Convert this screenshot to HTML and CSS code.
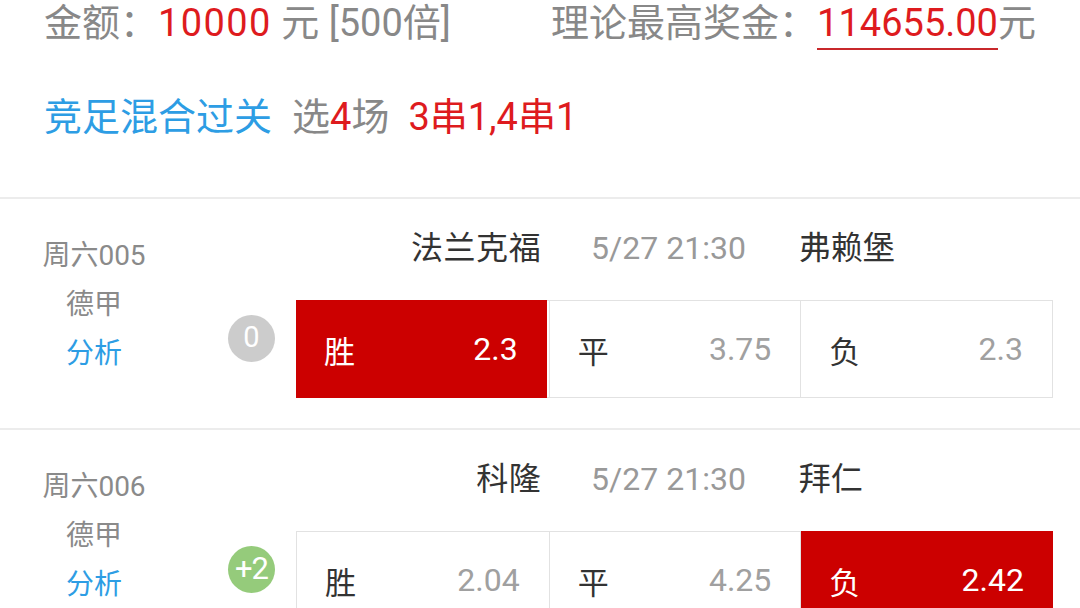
FILE: index.html
```html
<!DOCTYPE html>
<html lang="zh-CN">
<head>
<meta charset="utf-8">
<title>投注详情</title>
<link rel="stylesheet" href="styles.css">
</head>
<body>
<div class="summary">
  <div class="line line-top">
    <div class="amount">金额：<span class="red digits">10000</span> 元 [500倍]</div>
    <div class="prize">理论最高奖金：<span class="red underline">114655.00</span>元</div>
  </div>
  <div class="line line-type">
    <span class="blue">竞足混合过关</span>
    <span class="pick">选<span class="red">4</span>场</span>
    <span class="red pass">3串1,4串1</span>
  </div>
</div>

<div class="match">
  <div class="info">
    <div class="num">周六005</div>
    <div class="league">德甲</div>
    <div class="analysis">分析</div>
  </div>
  <div class="handicap">
    <div class="hc hc-zero">0</div>
  </div>
  <div class="main">
    <div class="teams">
      <div class="home">法兰克福</div>
      <div class="time">5/27 21:30</div>
      <div class="away">弗赖堡</div>
    </div>
    <div class="odds">
      <div class="cell selected"><span class="lab">胜</span><span class="val">2.3</span></div>
      <div class="cell"><span class="lab">平</span><span class="val">3.75</span></div>
      <div class="cell"><span class="lab">负</span><span class="val">2.3</span></div>
    </div>
  </div>
</div>

<div class="match">
  <div class="info">
    <div class="num">周六006</div>
    <div class="league">德甲</div>
    <div class="analysis">分析</div>
  </div>
  <div class="handicap">
    <div class="hc hc-plus">+2</div>
  </div>
  <div class="main">
    <div class="teams">
      <div class="home">科隆</div>
      <div class="time">5/27 21:30</div>
      <div class="away">拜仁</div>
    </div>
    <div class="odds">
      <div class="cell"><span class="lab">胜</span><span class="val">2.04</span></div>
      <div class="cell"><span class="lab">平</span><span class="val">4.25</span></div>
      <div class="cell selected"><span class="lab">负</span><span class="val">2.42</span></div>
    </div>
  </div>
</div>
</body>
</html>
```

FILE: styles.css
```css
* { box-sizing: border-box; }

body {
  margin: 0;
  background: #ffffff;
  font-family: Roboto, "Noto Sans CJK SC", sans-serif;
  color: #888888;
  overflow: hidden;
}

.red { color: #de1b1e; }
.blue { color: #2d9de4; }

.summary {
  padding: 0 44px;
  font-size: 38px;
}

.line {
  height: 46px;
  line-height: 46px;
  white-space: nowrap;
}

.line-top {
  display: flex;
  justify-content: space-between;
}

.digits { letter-spacing: 1.4px; }

.underline {
  display: inline-block;
  line-height: 46px;
  border-bottom: 2px solid #c8282b;
  height: 50px;
}

.line-type {
  margin-top: 48px;
  margin-bottom: 57px;
  display: flex;
}

.pick { margin-left: 20px; }
.pass { margin-left: 19px; }

.match {
  border-top: 2px solid #ececec;
  display: grid;
  grid-template-columns: 104px 1fr 757px;
  padding: 0 27px 30px 42px;
}

.info {
  padding-top: 32px;
  text-align: center;
  font-size: 28px;
  line-height: 49px;
  color: #8a8a8a;
  white-space: nowrap;
}

.info .analysis { color: #2d9de4; }

.handicap {
  display: flex;
  justify-content: flex-end;
  padding-top: 116px;
  padding-right: 21px;
}

.hc {
  width: 47px;
  height: 47px;
  border-radius: 50%;
  color: #ffffff;
  font-size: 29px;
  line-height: 45px;
  text-align: center;
  white-space: nowrap;
}

.hc-zero { background: #cccccc; }
.hc-plus { background: #95cb7b; font-size: 31px; letter-spacing: -1px; }

.teams {
  display: grid;
  grid-template-columns: 1fr 1fr 1fr;
  height: 98px;
  line-height: 98px;
  font-size: 32px;
  color: #333333;
  margin-bottom: 3px;
  white-space: nowrap;
}

.home { text-align: right; padding-right: 7px; letter-spacing: 0.6px; }
.time { text-align: center; color: #999999; padding-right: 12px; }
.away { text-align: left; margin-left: -2px; }

.odds {
  display: grid;
  grid-template-columns: 1fr 1fr 1fr;
  height: 98px;
  border: 1px solid #e2e2e2;
}

.cell {
  display: flex;
  justify-content: space-between;
  align-items: center;
  padding: 0 29px 0 28px;
  font-size: 32px;
  border-left: 1px solid #e2e2e2;
}

.cell:first-child { border-left: none; }

.cell .lab { color: #333333; font-size: 31px; }
.cell .val { color: #a0a0a0; }

.cell.selected {
  background: #cc0000;
  margin: -1px 0;
}

.cell.selected:first-child { margin-left: -1px; margin-right: 2px; }
.cell.selected:last-child { margin-right: -1px; }

.cell.selected .lab,
.cell.selected .val { color: #ffffff; }
```
